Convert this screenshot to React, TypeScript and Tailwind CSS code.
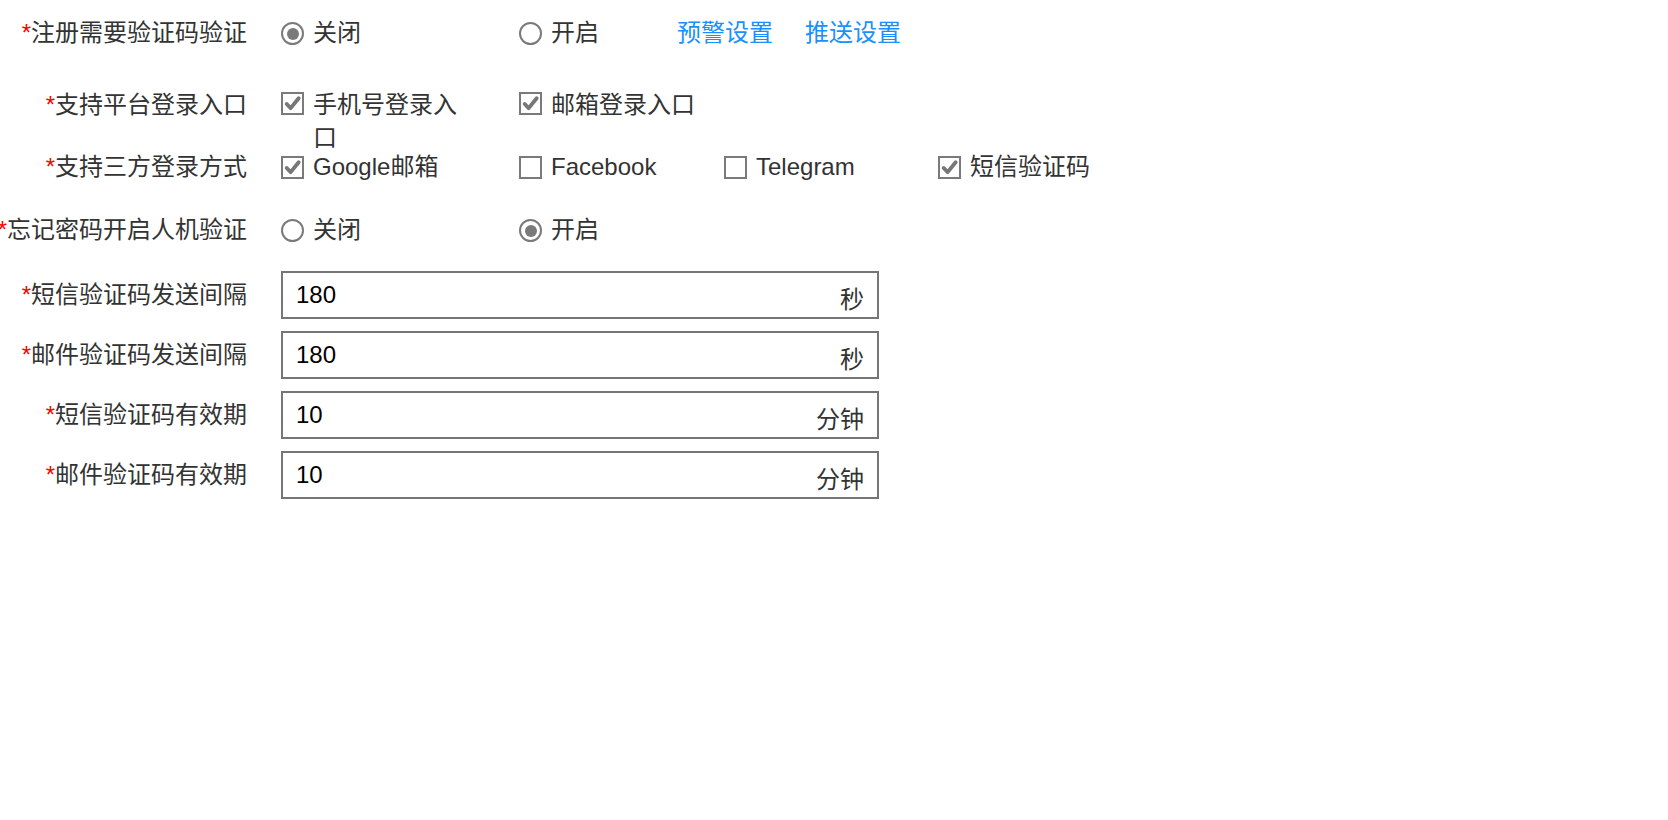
import type { ReactNode } from "react";

const font = "font-['Liberation_Sans','Noto_Sans_CJK_SC',sans-serif]";

function Radio({ checked }: { checked?: boolean }) {
  return (
    <span className="mt-[6px] flex h-[23px] w-[23px] shrink-0 items-center justify-center rounded-full border-2 border-[#7a7a7a] bg-white">
      {checked && <span className="h-[12px] w-[12px] rounded-full bg-[#7a7a7a]" />}
    </span>
  );
}

function Checkbox({ checked, className = "mt-[6px]" }: { checked?: boolean; className?: string }) {
  return (
    <span
      className={`flex h-[23px] w-[23px] shrink-0 items-center justify-center border-2 border-[#7a7a7a] bg-white ${className}`}
    >
      {checked && (
        <svg viewBox="0 0 16 16" className="h-[17px] w-[17px]">
          <path
            d="M2.6 8.4 L6.3 12.4 L13.8 3.0"
            fill="none"
            stroke="#777"
            strokeWidth="3.6"
            strokeLinecap="round"
            strokeLinejoin="round"
          />
        </svg>
      )}
    </span>
  );
}

function Label({ text }: { text: string }) {
  return (
    <div className="flex w-[247px] shrink-0 justify-end whitespace-nowrap leading-[34px] text-[#333]">
      <span className="text-[#ff0000]">*</span>
      {text}
    </div>
  );
}

function Option({
  control,
  children,
  width,
}: {
  control: ReactNode;
  children: ReactNode;
  width: string;
}) {
  return (
    <label className={`flex shrink-0 items-start gap-[9px] ${width}`}>
      {control}
      <span className="whitespace-nowrap leading-[34px] text-[#333]">{children}</span>
    </label>
  );
}

function NumberField({ label, value, unit }: { label: string; value: string; unit: string }) {
  return (
    <div className="flex h-[48px] items-center">
      <Label text={label} />
      <div className="ml-[34px] flex h-[48px] w-[598px] items-center justify-between border-2 border-[#767676] px-[13px]">
        <span className="text-black">{value}</span>
        <span className="mt-[10px] text-[#333]">{unit}</span>
      </div>
    </div>
  );
}

export default function App() {
  return (
    <div className={`min-h-[820px] w-full bg-white pt-[16px] text-[24px] ${font}`}>
      {/* 注册验证码 */}
      <div className="flex h-[34px] items-start">
        <Label text="注册需要验证码验证" />
        <div className="ml-[34px] flex items-start">
          <Option control={<Radio checked />} width="w-[238px]">
            关闭
          </Option>
          <Option control={<Radio />} width="w-[158px]">
            开启
          </Option>
          <a className="leading-[34px] text-[#1890ff]">预警设置</a>
          <a className="ml-[32px] leading-[34px] text-[#1890ff]">推送设置</a>
        </div>
      </div>

      {/* 平台登录入口 */}
      <div className="mt-[38px] flex h-[62px] items-start">
        <Label text="支持平台登录入口" />
        <div className="ml-[34px] flex items-start">
          <label className="flex w-[238px] shrink-0 items-start gap-[9px]">
            <Checkbox checked className="mt-[4px]" />
            <span className="w-[150px] leading-[33px] text-[#333]">手机号登录入口</span>
          </label>
          <Option control={<Checkbox checked className="mt-[4px]" />} width="w-[205px]">
            <span className="leading-[33px]">邮箱登录入口</span>
          </Option>
        </div>
      </div>

      {/* 三方登录 */}
      <div className="flex h-[34px] items-start">
        <Label text="支持三方登录方式" />
        <div className="ml-[34px] flex items-start">
          <Option control={<Checkbox checked />} width="w-[238px]">
            Google邮箱
          </Option>
          <Option control={<Checkbox />} width="w-[205px]">
            Facebook
          </Option>
          <Option control={<Checkbox />} width="w-[214px]">
            Telegram
          </Option>
          <Option control={<Checkbox checked />} width="w-[150px]">
            短信验证码
          </Option>
        </div>
      </div>

      {/* 人机验证 */}
      <div className="mt-[29px] flex h-[34px] items-start">
        <Label text="忘记密码开启人机验证" />
        <div className="ml-[34px] flex items-start">
          <Option control={<Radio />} width="w-[238px]">
            关闭
          </Option>
          <Option control={<Radio checked />} width="w-[158px]">
            开启
          </Option>
        </div>
      </div>

      <div className="mt-[24px] flex flex-col gap-[12px]">
        <NumberField label="短信验证码发送间隔" value="180" unit="秒" />
        <NumberField label="邮件验证码发送间隔" value="180" unit="秒" />
        <NumberField label="短信验证码有效期" value="10" unit="分钟" />
        <NumberField label="邮件验证码有效期" value="10" unit="分钟" />
      </div>
    </div>
  );
}
